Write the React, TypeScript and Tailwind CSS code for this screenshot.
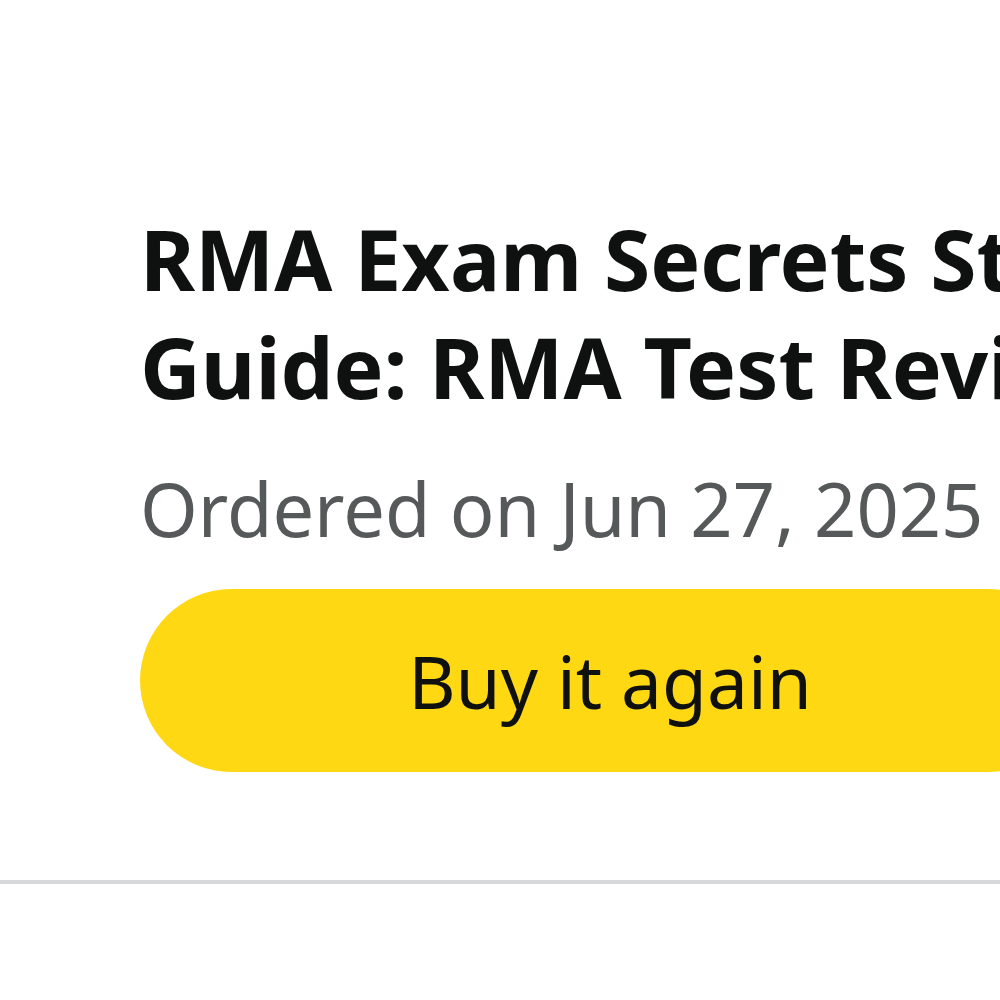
export default function App() {
  return (
    <div className="w-[1000px] h-[1000px] overflow-hidden bg-white" style={{ fontFamily: '"Noto Sans", sans-serif' }}>
      <div className="pt-[205px] pl-[140px] w-[1300px]">
        <h1 className="text-[84px] leading-[108px] font-bold text-[#0f1111]">
          <div className="whitespace-nowrap">RMA Exam Secrets Study</div>
          <div className="whitespace-nowrap">Guide: RMA Test Review for the Registered</div>
        </h1>
        <p className="mt-[40px] text-[74px] leading-[96px] text-[#565959] whitespace-nowrap">Ordered on Jun 27, 2025</p>
        <button className="mt-[32px] w-[940px] h-[183px] rounded-full bg-[#ffd814] text-[#0f1111] text-[73px] flex items-center justify-center">
          Buy it again
        </button>
      </div>
      <div className="mt-[108px] h-[4px] bg-[#d5d9d9]" />
    </div>
  );
}
